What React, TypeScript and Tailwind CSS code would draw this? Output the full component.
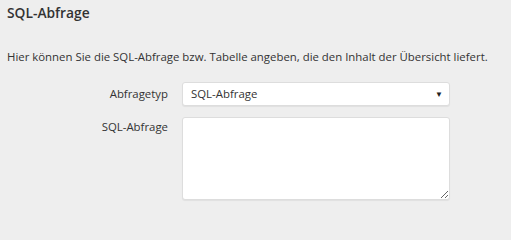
export default function App() {
  return (
    <div
      className="min-h-screen w-full overflow-hidden bg-[#eeeeee] text-[#333333]"
      style={{ fontFamily: '"Open Sans", "Liberation Sans", sans-serif' }}
    >
      <h2 className="px-[7px] pt-[3px] text-[13.8px] font-semibold leading-[20px] text-[#333333]">
        SQL-Abfrage
      </h2>
      <p className="mt-[26px] whitespace-nowrap px-[7px] text-[11.4px] leading-[16px]">
        Hier können Sie die SQL-Abfrage bzw. Tabelle angeben, die den Inhalt der Übersicht liefert.
      </p>
      <div className="mt-[17px] grid grid-cols-[168px_268px] gap-x-[14px] gap-y-[11px]">
        <label className="self-center text-right text-[11.4px] leading-[16px]">Abfragetyp</label>
        <div className="relative flex h-[24px] items-center rounded-[3px] border border-[#dddddd] bg-white pl-[8px] text-[11.4px] shadow-[0_1px_1px_rgba(0,0,0,0.06)]">
          SQL-Abfrage
          <span className="absolute right-[6px] top-[6px] text-[8px] leading-[10px] text-[#222222]">▼</span>
        </div>
        <label className="pt-[2px] text-right text-[11.4px] leading-[16px]">SQL-Abfrage</label>
        <textarea className="h-[83px] w-[268px] rounded-[3px] border border-[#dddddd] bg-white shadow-[0_1px_1px_rgba(0,0,0,0.06)] outline-none" />
      </div>
    </div>
  )
}
